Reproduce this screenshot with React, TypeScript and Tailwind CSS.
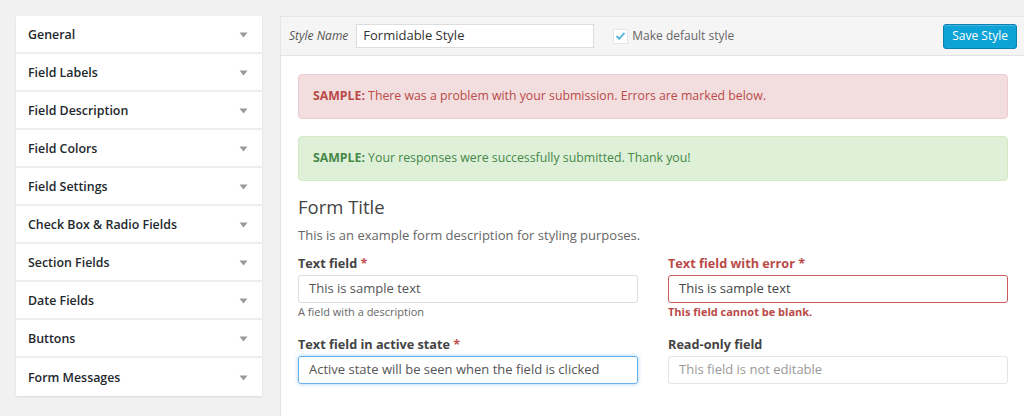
import React from "react";

const items = [
  "General",
  "Field Labels",
  "Field Description",
  "Field Colors",
  "Field Settings",
  "Check Box & Radio Fields",
  "Section Fields",
  "Date Fields",
  "Buttons",
  "Form Messages",
];

function Arrow() {
  return (
    <svg width="9" height="6" viewBox="0 0 9 6" className="shrink-0">
      <path d="M0.5 0.5 L8.5 0.5 L4.5 5.5 Z" fill="#9a9a9a" />
    </svg>
  );
}

export default function App() {
  return (
    <div
      className="w-[1024px] h-[416px] bg-[#f1f1f1] flex items-start overflow-hidden"
      style={{ fontFamily: '"Open Sans", "Noto Sans", sans-serif' }}
    >
      {/* Sidebar */}
      <div className="ml-[16px] mt-[16px] w-[246px] bg-white shadow-[0_1px_2px_rgba(0,0,0,0.1)]">
        {items.map((it, i) => (
          <div
            key={it}
            className={`h-[38px] flex items-center justify-between pl-[12px] pr-[14px] pt-[2px] ${
              i < items.length - 1 ? "border-b-[2px] border-[#eeeeee]" : ""
            }`}
          >
            <span className="text-[12.4px] font-semibold text-[#23282d] pt-[1px]">{it}</span>
            <Arrow />
          </div>
        ))}
      </div>

      {/* Main */}
      <div className="ml-[18px] mt-[16px] flex-1 h-[400px] bg-white border-l border-t border-[#e5e5e5] flex flex-col">
        <div className="h-[39px] bg-[#f5f5f5] border-b border-[#e3e3e3] flex items-center pl-[8px] pr-[7px]">
          <span className="text-[12px] italic text-[#555]">Style Name</span>
          <div className="ml-[8px] w-[238px] h-[24px] bg-white border border-[#dddddd] flex items-center pl-[6px] text-[13px] text-[#333]">
            Formidable Style
          </div>
          <div className="ml-[19px] w-[15px] h-[15px] bg-white border border-[#e5e5e5] flex items-center justify-center">
            <svg width="11" height="10" viewBox="0 0 11 10">
              <path d="M1.5 5 L4.2 7.8 L9.5 1.8" stroke="#5bb6dd" strokeWidth="2" fill="none" />
            </svg>
          </div>
          <span className="ml-[4px] text-[12px] text-[#666]">Make default style</span>
          <div className="ml-auto h-[25px] px-[8px] bg-[#0ea3d6] border border-[#0b7fb0] rounded-[3px] flex items-center text-[12px] text-white shadow-[inset_0_1px_0_rgba(120,200,230,0.5)]">
            Save Style
          </div>
        </div>

        <div className="pl-[17px] pr-[16px] pt-[18px] flex flex-col">
          <div className="h-[45px] rounded-[4px] bg-[#f2dede] border border-[#ebccd1] flex items-center px-[14px] text-[12.3px] text-[#b94a48]">
            <span className="font-bold">SAMPLE:</span>&nbsp;There was a problem with your submission. Errors are marked below.
          </div>
          <div className="mt-[17px] h-[45px] rounded-[4px] bg-[#dff0d8] border border-[#d6e9c6] flex items-center px-[14px] text-[12.3px] text-[#468847]">
            <span className="font-bold">SAMPLE:</span>&nbsp;Your responses were successfully submitted. Thank you!
          </div>

          <div className="mt-[13px] text-[18.5px] text-[#444] leading-[26px]">Form Title</div>
          <div className="mt-[6px] text-[13px] text-[#666] leading-[18px]">
            This is an example form description for styling purposes.
          </div>

          <div className="mt-[10px] grid grid-cols-2 gap-x-[30px]">
            <div className="flex flex-col">
              <div className="text-[12.7px] font-bold text-[#444] leading-[18px]">
                Text field <span className="text-[#c0504d]">*</span>
              </div>
              <div className="mt-[3px] h-[28px] border border-[#dddddd] rounded-[3px] flex items-center px-[10px] text-[13px] text-[#555]">
                This is sample text
              </div>
              <div className="mt-[2px] text-[11px] text-[#666] leading-[14px]">A field with a description</div>
            </div>
            <div className="flex flex-col">
              <div className="text-[12.7px] font-bold text-[#b94a48] leading-[18px]">Text field with error *</div>
              <div className="mt-[3px] h-[28px] border border-[#cc5a58] rounded-[3px] flex items-center px-[10px] text-[13px] text-[#444]">
                This is sample text
              </div>
              <div className="mt-[2px] text-[11px] font-bold text-[#b94a48] leading-[14px]">This field cannot be blank.</div>
            </div>

            <div className="flex flex-col mt-[16px]">
              <div className="text-[12.7px] font-bold text-[#444] leading-[18px]">
                Text field in active state <span className="text-[#c0504d]">*</span>
              </div>
              <div className="mt-[3px] h-[28px] border border-[#66afe9] rounded-[3px] shadow-[0_0_4px_rgba(102,175,233,0.6)] flex items-center px-[10px] text-[13px] text-[#555]">
                Active state will be seen when the field is clicked
              </div>
            </div>
            <div className="flex flex-col mt-[16px]">
              <div className="text-[12.7px] font-bold text-[#444] leading-[18px]">Read-only field</div>
              <div className="mt-[3px] h-[28px] border border-[#e5e5e5] rounded-[3px] flex items-center px-[10px] text-[13px] text-[#999]">
                This field is not editable
              </div>
            </div>
          </div>
        </div>
      </div>
    </div>
  );
}
